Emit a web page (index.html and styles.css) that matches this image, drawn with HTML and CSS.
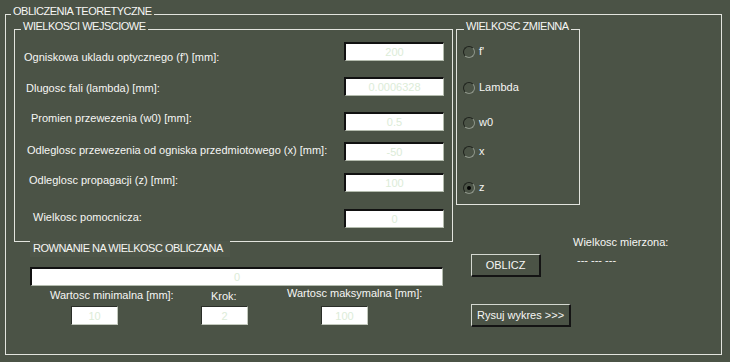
FILE: index.html
```html
<!DOCTYPE html>
<html lang="pl">
<head>
    <meta charset="UTF-8">
    <title>Obliczenia teoretyczne</title>
    <link rel="stylesheet" href="styles.css">
</head>
<body>
    <div class="panel main">
        <div class="panel-title">OBLICZENIA TEORETYCZNE</div>
        <div class="main-grid">
            <div class="left">
                <div class="panel inputs">
                    <div class="panel-title">WIELKOSCI WEJSCIOWE</div>
                    <div class="field">
                        <span class="field-label">Ogniskowa ukladu optycznego (f') [mm]:</span>
                        <input class="num num-wide" type="text" value="200" readonly>
                    </div>
                    <div class="field">
                        <span class="field-label">Dlugosc fali (lambda) [mm]:</span>
                        <input class="num num-wide" type="text" value="0.0006328" readonly>
                    </div>
                    <div class="field">
                        <span class="field-label">Promien przewezenia (w0) [mm]:</span>
                        <input class="num num-wide" type="text" value="0.5" readonly>
                    </div>
                    <div class="field">
                        <span class="field-label">Odleglosc przewezenia od ogniska przedmiotowego (x) [mm]:</span>
                        <input class="num num-wide" type="text" value="-50" readonly>
                    </div>
                    <div class="field">
                        <span class="field-label">Odleglosc propagacji (z) [mm]:</span>
                        <input class="num num-wide" type="text" value="100" readonly>
                    </div>
                    <div class="field">
                        <span class="field-label">Wielkosc pomocnicza:</span>
                        <input class="num num-wide" type="text" value="0" readonly>
                    </div>
                </div>

                <div class="eq-title">ROWNANIE NA WIELKOSC OBLICZANA</div>
                <input class="num eq-input" type="text" value="0" readonly>

                <div class="range-labels">
                    <span class="lbl-min">Wartosc minimalna [mm]:</span>
                    <span class="lbl-step">Krok:</span>
                    <span class="lbl-max">Wartosc maksymalna [mm]:</span>
                </div>
                <div class="range-inputs">
                    <input class="num num-small in-min" type="text" value="10" readonly>
                    <input class="num num-small in-step" type="text" value="2" readonly>
                    <input class="num num-small in-max" type="text" value="100" readonly>
                </div>
            </div>

            <div class="right">
                <div class="panel vars">
                    <div class="panel-title">WIELKOSC ZMIENNA</div>
                    <div class="opt"><span class="dot"></span>f'</div>
                    <div class="opt"><span class="dot"></span>Lambda</div>
                    <div class="opt"><span class="dot"></span>w0</div>
                    <div class="opt"><span class="dot"></span>x</div>
                    <div class="opt"><span class="dot checked"></span>z</div>
                </div>

                <div class="actions">
                    <div class="buttons">
                        <button class="btn btn-calc">OBLICZ</button>
                        <button class="btn btn-plot">Rysuj wykres &gt;&gt;&gt;</button>
                    </div>
                    <div class="measured">
                        <div>Wielkosc mierzona:</div>
                        <div class="measured-value">--- --- ---</div>
                    </div>
                </div>
            </div>
        </div>
    </div>
</body>
</html>
```

FILE: styles.css
```css
body {
    margin: 0;
    background: #4b5346;
    font-family: "Liberation Sans", Arial, sans-serif;
    font-size: 11px;
    line-height: 13px;
    color: #f6f6f4;
}

.panel {
    border: 1px solid #e2e4de;
    box-sizing: border-box;
}

.panel-title {
    display: block;
    width: max-content;
    margin-top: -10px;
    padding: 0 2px;
    background: #4b5346;
    letter-spacing: -0.5px;
}

.main {
    margin: 14px 0 0 5px;
    width: 717px;
    height: 341px;
}

.main > .panel-title {
    margin-left: 5px;
}

.main-grid {
    display: grid;
    grid-template-columns: 439px 1fr;
    column-gap: 3px;
    padding-left: 8px;
    margin-top: 11px;
}

/* input values panel */
.inputs {
    height: 213px;
}

.inputs > .panel-title {
    margin-left: 6px;
}

.field {
    display: flex;
    align-items: flex-start;
    height: 19px;
    padding-right: 8px;
    margin-top: 16px;
}

.field-label {
    white-space: nowrap;
}

.num-wide {
    margin-left: auto;
    width: 100px;
}

/* rows were placed by hand in the original, so each one has its own offsets */
.field:nth-child(2) { margin-top: 9px; }
.field:nth-child(5) { margin-top: 11px; }
.field:nth-child(6) { margin-top: 12px; }
.field:nth-child(7) { margin-top: 17px; }

.field:nth-child(2) .field-label { margin: 9px 0 0 9px; }
.field:nth-child(3) .field-label { margin: 5px 0 0 11px; }
.field:nth-child(4) .field-label { margin: 0 0 0 16px; }
.field:nth-child(5) .field-label { margin: 2px 0 0 12px; }
.field:nth-child(6) .field-label { margin: 1px 0 0 14px; }
.field:nth-child(7) .field-label { margin: 2px 0 0 18px; }

.num {
    box-sizing: border-box;
    height: 19px;
    padding: 0;
    background: #fff;
    border-style: solid;
    border-width: 2px 1px 1px 2px;
    border-color: #111 #b4bcae #b4bcae #111;
    color: #dcecd8;
    font: inherit;
    text-align: center;
    outline: none;
}

/* equation part */
.eq-title {
    width: 200px;
    box-sizing: border-box;
    margin: -1px 0 0 16px;
    padding: 1px 0 2px 3px;
    background: #4e5649;
    letter-spacing: -0.5px;
}

.eq-input {
    display: block;
    margin: 10px 0 0 16px;
    width: 413px;
}

.range-labels {
    display: flex;
    align-items: flex-start;
    margin-top: 1px;
}

.lbl-min {
    width: 161px;
    margin: 2px 0 0 36px;
}

.lbl-step {
    width: 76px;
    margin-top: 3px;
}

.range-inputs {
    display: flex;
    margin-top: 3px;
}

.num-small {
    width: 47px;
    border-width: 1px;
    border-color: #2a2e28 #c4cabe #c4cabe #2a2e28;
}

.in-min { margin-left: 57px; }
.in-step { margin-left: 83px; }
.in-max { margin-left: 73px; }

/* variable choice panel */
.right {
    display: flex;
    flex-direction: column;
    align-items: flex-start;
}

.vars {
    width: 124px;
    padding-bottom: 10px;
}

.vars > .panel-title {
    margin-left: 7px;
}

.opt {
    display: flex;
    align-items: center;
    gap: 4px;
    height: 13px;
    padding-left: 6px;
    margin-top: 23px;
}

.opt:nth-child(2) { margin-top: 12px; }
.opt:nth-child(4) { margin-top: 22px; }
.opt:nth-child(5) { margin-top: 16px; }

.dot {
    position: relative;
    width: 12px;
    height: 12px;
    box-sizing: border-box;
    border-radius: 50%;
    border: 1px solid;
    border-color: #1f231d #8e968a #8e968a #1f231d;
}

.dot.checked::after {
    content: "";
    position: absolute;
    left: 3px;
    top: 3px;
    width: 4px;
    height: 4px;
    border-radius: 50%;
    background: #000;
}

.actions {
    display: flex;
    align-items: flex-start;
}

.buttons {
    display: flex;
    flex-direction: column;
    align-items: flex-start;
    gap: 27px;
    width: 100px;
    margin: 49px 0 0 15px;
}

.btn {
    box-sizing: border-box;
    height: 23px;
    padding: 0;
    background: #4b5346;
    color: #f6f6f4;
    font: inherit;
    border-style: solid;
    border-width: 1px 2px 2px 1px;
    border-color: #d4d8d0 #141414 #141414 #d4d8d0;
}

.btn-calc { width: 70px; }
.btn-plot { width: 100px; }

.measured {
    margin: 31px 0 0 2px;
    white-space: nowrap;
}

.measured-value {
    margin: 5px 0 0 4px;
}
```
